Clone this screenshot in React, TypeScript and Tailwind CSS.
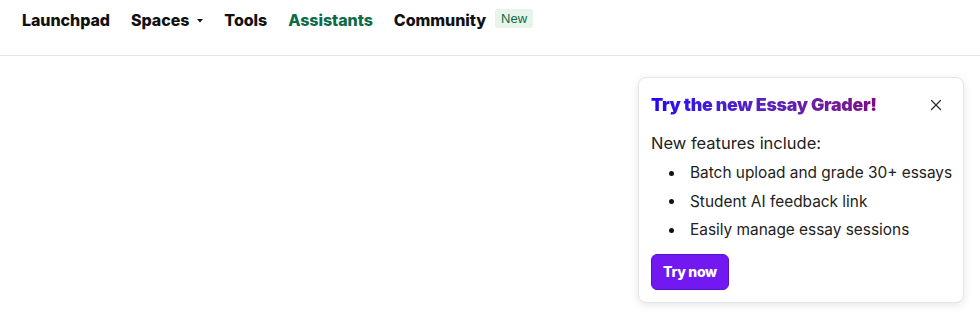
import { X } from "lucide-react";

const navItems = [
  { label: "Launchpad" },
  { label: "Spaces", caret: true },
  { label: "Tools" },
  { label: "Assistants", active: true },
  { label: "Community", badge: "New" },
];

const features = [
  "Batch upload and grade 30+ essays",
  "Student AI feedback link",
  "Easily manage essay sessions",
];

export default function App() {
  return (
    <div className="relative min-h-[335px] w-full bg-white font-['Inter',sans-serif] text-[#1f2328]">
      {/* Top nav */}
      <header className="flex h-[56px] items-start border-b border-[#e3e3e3] pl-[22px] pt-[9px]">
        <nav className="flex items-center gap-[21px] text-[16px] font-extrabold tracking-[-0.05px] text-[#111]">
          {navItems.map((item) => (
            <div key={item.label} className="flex h-[22px] items-center">
              <span className={item.active ? "text-[#0b6b47]" : ""}>{item.label}</span>
              {item.caret && (
                <svg width="6" height="4" viewBox="0 0 6 4" className="ml-[8px] mt-[1px]" fill="currentColor">
                  <path d="M0 0h6L3 3.5z" />
                </svg>
              )}
              {item.badge && (
                <span className="ml-[9px] -mt-[3px] flex h-[19px] items-center rounded-[3px] bg-[#e6f4ea] px-[6px] font-['Liberation_Sans',sans-serif] text-[13px] font-normal tracking-normal text-[#0b6b47]">
                  {item.badge}
                </span>
              )}
            </div>
          ))}
        </nav>
      </header>

      {/* Announcement popover */}
      <div className="absolute right-[16px] top-[77px] w-[326px] rounded-[8px] border border-[#e5e5ea] bg-white pb-[12px] pl-[12px] pr-[16px] pt-[14px] shadow-[0_2px_8px_rgba(0,0,0,0.10)]">
        <div className="flex items-center justify-between">
          <h2 className="bg-gradient-to-r from-[#2200f5] to-[#7f0785] bg-clip-text text-[17.8px] font-black leading-[26px] tracking-[-0.3px] text-transparent">
            Try the new Essay Grader!
          </h2>
          <button type="button" aria-label="Close" className="mr-[2px] text-[#2b2f36]">
            <X size={18} strokeWidth={1.6} />
          </button>
        </div>
        <p className="mt-[13px] text-[16.5px] leading-[24px] text-[#222]">New features include:</p>
        <ul className="mt-[4px] flex flex-col text-[15.4px] leading-[28.5px] text-[#222]">
          {features.map((f) => (
            <li key={f} className="flex items-center whitespace-nowrap">
              <span className="ml-[18px] mr-[16px] h-[5px] w-[5px] shrink-0 rounded-full bg-[#111]" />
              {f}
            </li>
          ))}
        </ul>
        <button
          type="button"
          className="mt-[9px] h-[36px] rounded-[6px] border border-[#5a12c9] bg-[#7119f0] px-[11px] text-[14px] font-extrabold tracking-[-0.3px] text-white"
        >
          Try now
        </button>
      </div>
    </div>
  );
}
